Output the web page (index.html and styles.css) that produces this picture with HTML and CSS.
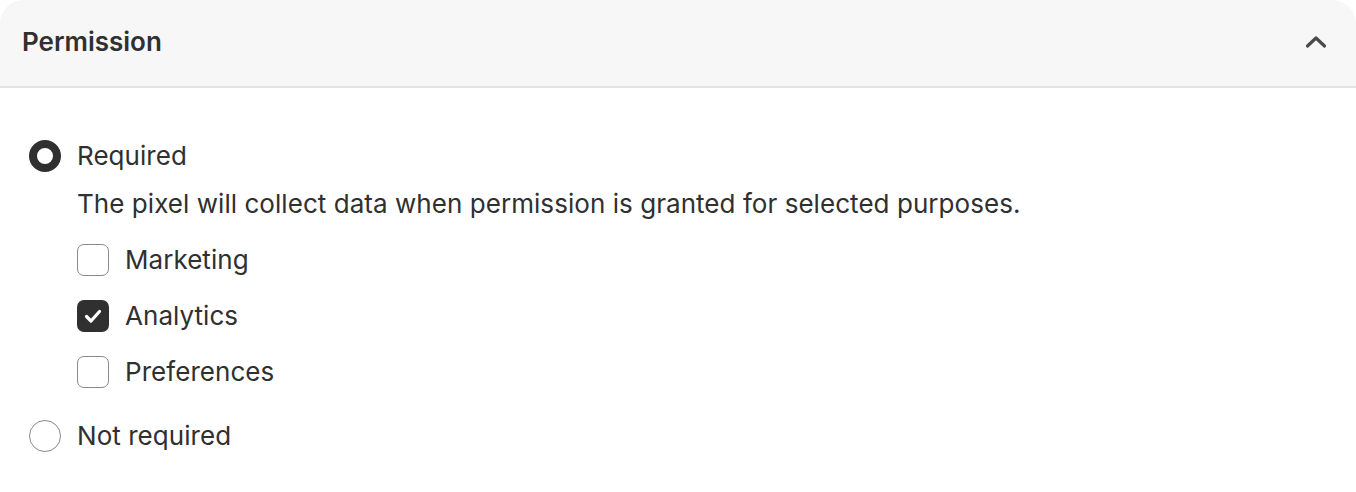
FILE: index.html
```html
<!DOCTYPE html>
<html lang="en">

<head>
    <meta charset="UTF-8">
    <meta name="viewport" content="width=device-width, initial-scale=1.0">
    <title>Permission</title>
    <link rel="stylesheet" href="styles.css">
</head>

<body>
    <section class="card">
        <header class="card-header">
            <h2>Permission</h2>
            <button class="collapse" aria-label="Collapse">
                <svg width="24" height="24" viewBox="0 0 24 24" fill="none">
                    <path d="M3.5 16 L12 8 L20.5 16" stroke="#4a4a4a" stroke-width="3.2" stroke-linecap="round" stroke-linejoin="round" />
                </svg>
            </button>
        </header>

        <div class="card-body">
            <label class="radio-row">
                <span class="radio checked"></span>
                <span class="label">Required</span>
            </label>
            <p class="help">The pixel will collect data when permission is granted for selected purposes.</p>

            <div class="purposes">
                <label class="check-row">
                    <span class="checkbox"></span>
                    <span class="label">Marketing</span>
                </label>
                <label class="check-row">
                    <span class="checkbox checked">
                        <svg width="32" height="32" viewBox="0 0 32 32" fill="none">
                            <path d="M9.5 16.5 L14 21 L22.5 11.5" stroke="#fff" stroke-width="3.2" stroke-linecap="round" stroke-linejoin="round" />
                        </svg>
                    </span>
                    <span class="label">Analytics</span>
                </label>
                <label class="check-row">
                    <span class="checkbox"></span>
                    <span class="label">Preferences</span>
                </label>
            </div>

            <label class="radio-row last">
                <span class="radio"></span>
                <span class="label">Not required</span>
            </label>
        </div>
    </section>
</body>

</html>
```

FILE: styles.css
```css
* {
    padding: 0;
    margin: 0;
    box-sizing: border-box;
    font-family: Inter, 'Noto Sans', sans-serif;
}

:root {
    --text: #303030;
    --bg-header: #f7f7f7;
    --border: #e3e3e3;
    --control: #8a8a8a;
}

body {
    background: #fff;
    color: var(--text);
}

.card {
    width: 1356px;
    height: 492px;
    border-radius: 24px 24px 0 0;
    overflow: hidden;
    background: #fff;
}

.card-header {
    height: 88px;
    display: flex;
    align-items: center;
    justify-content: space-between;
    padding: 0 28px 2px 22px;
    background: var(--bg-header);
    border-bottom: 2px solid var(--border);
}

.card-header h2 {
    font-size: 26px;
    font-weight: 600;
    line-height: 40px;
}

.collapse {
    display: flex;
    background: none;
    border: none;
}

.card-body {
    padding: 48px 29px 0;
    display: flex;
    flex-direction: column;
}

.label {
    font-size: 26px;
    line-height: 40px;
    letter-spacing: 0.05px;
}

.radio-row,
.check-row {
    display: flex;
    align-items: center;
    height: 40px;
}

.radio {
    width: 32px;
    height: 32px;
    border-radius: 50%;
    border: 1.5px solid var(--control);
    margin-right: 16px;
}

.radio.checked {
    border: 8px solid var(--text);
}

.help {
    font-size: 26px;
    line-height: 40px;
    letter-spacing: 0.05px;
    margin: 8px 0 0 48px;
}

.purposes {
    display: flex;
    flex-direction: column;
    gap: 16px;
    margin: 16px 0 0 48px;
}

.checkbox {
    width: 32px;
    height: 32px;
    border-radius: 7px;
    border: 1.5px solid var(--control);
    margin-right: 16px;
}

.checkbox.checked {
    border: none;
    background: var(--text);
}

.radio-row.last {
    margin-top: 24px;
}
```
